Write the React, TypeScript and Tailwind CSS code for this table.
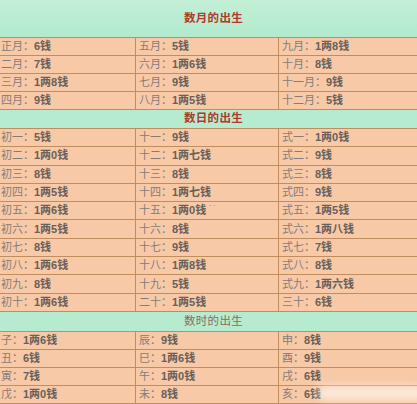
const months: [string, string][] = [
  ["正月", "6钱"], ["五月", "5钱"], ["九月", "1两8钱"],
  ["二月", "7钱"], ["六月", "1两6钱"], ["十月", "8钱"],
  ["三月", "1两8钱"], ["七月", "9钱"], ["十一月", "9钱"],
  ["四月", "9钱"], ["八月", "1两5钱"], ["十二月", "5钱"],
];

const days: [string, string][] = [
  ["初一", "5钱"], ["十一", "9钱"], ["式一", "1两0钱"],
  ["初二", "1两0钱"], ["十二", "1两七钱"], ["式二", "9钱"],
  ["初三", "8钱"], ["十三", "8钱"], ["式三", "8钱"],
  ["初四", "1两5钱"], ["十四", "1两七钱"], ["式四", "9钱"],
  ["初五", "1两6钱"], ["十五", "1两0钱"], ["式五", "1两5钱"],
  ["初六", "1两5钱"], ["十六", "8钱"], ["式六", "1两八钱"],
  ["初七", "8钱"], ["十七", "9钱"], ["式七", "7钱"],
  ["初八", "1两6钱"], ["十八", "1两8钱"], ["式八", "8钱"],
  ["初九", "8钱"], ["十九", "5钱"], ["式九", "1两六钱"],
  ["初十", "1两6钱"], ["二十", "1两5钱"], ["三十", "6钱"],
];

const hours: [string, string][] = [
  ["子", "1两6钱"], ["辰", "9钱"], ["申", "8钱"],
  ["丑", "6钱"], ["巳", "1两6钱"], ["酉", "9钱"],
  ["寅", "7钱"], ["午", "1两0钱"], ["戌", "6钱"],
  ["戊", "1两0钱"], ["未", "8钱"], ["亥", "6钱"],
];

const Cells = ({ items, rowClass }: { items: [string, string][]; rowClass: string }) => (
  <>
    {items.map(([label, value], i) => (
      <div
        key={label + i}
        className={`${rowClass} flex items-center border-b-[1.5px] border-[#c08d5e] text-[11px] leading-none ${
          i % 3 === 0 ? "pl-[1px] border-r-[1.5px]" : i % 3 === 1 ? "pl-[3px] border-r-[1.5px]" : "pl-[3px]"
        }`}
      >
        <span className="text-[#857c77]">{label}：</span>
        <span className="font-semibold text-[#67605b]">{value}</span>
        {label === "十五" && <span className="ml-[2px] -mt-2 text-[8px] text-[#9a9a9a]">‥</span>}
      </div>
    ))}
  </>
);

const Header = ({ title, className, textClass }: { title: string; className: string; textClass: string }) => (
  <div className={`col-span-3 flex items-center justify-center bg-[#b6ebcf] border-b-[1.5px] border-[#c08d5e] ${className}`}>
    <span className={`pl-[10px] text-[11.5px] tracking-[0.3px] ${textClass}`}>{title}</span>
  </div>
);

export default function App() {
  return (
    <div className="relative w-[417px] h-[404px] overflow-hidden bg-[#f8c9a7] font-['Liberation_Sans','Noto_Sans_CJK_SC',sans-serif]">
      <div className="grid grid-cols-[136px_143px_138px]">
        <Header
          title="数月的出生"
          className="h-[38px] bg-gradient-to-b from-[#c2efd6] to-[#b3eacd]"
          textClass="font-bold text-[#b0392c]"
        />
        <Cells items={months} rowClass="h-[18px]" />
        <Header title="数日的出生" className="h-[19px]" textClass="font-bold text-[#b0392c]" />
        <Cells items={days} rowClass="h-[18.3px]" />
        <Header title="数时的出生" className="h-[20px]" textClass="text-[#8c6c5e]" />
        <Cells items={hours} rowClass="h-[18px]" />
      </div>
      <div className="absolute right-[-10px] bottom-[4px] w-[110px] h-[14px] rounded-full bg-white/60 blur-[4px]" />
    </div>
  );
}
